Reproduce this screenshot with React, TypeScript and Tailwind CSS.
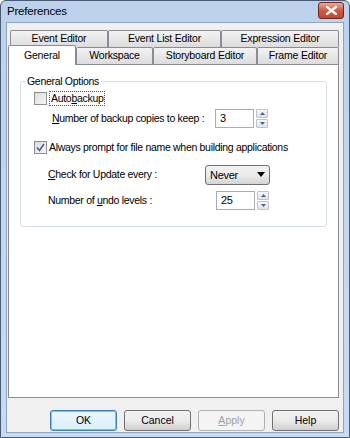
import React from 'react';

const font = { fontFamily: '"Liberation Sans", Arial, sans-serif' };

const Tab: React.FC<{ label: string; w: string; selected?: boolean }> = ({ label, w, selected }) => (
  <div
    className={`${w} flex items-center justify-center border border-[#898c95] border-b-0 rounded-t-[2px] text-[10.5px] tracking-[-0.2px] whitespace-nowrap text-black ${
      selected
        ? 'bg-white h-[20px] -mb-px relative z-10 -mt-[2px]'
        : 'h-[17px] bg-gradient-to-b from-[#f3f3f3] to-[#dcdcdc]'
    }`}
  >
    {label}
  </div>
);

const Spin: React.FC = () => (
  <div className="flex flex-col gap-px ml-[2px]">
    <div className="w-[12px] h-[9px] border border-[#bcc4cc] rounded-[1px] bg-gradient-to-b from-[#f5f7f9] to-[#dde3ea] flex items-center justify-center">
      <svg width="5" height="3" viewBox="0 0 5 3"><path d="M0 3 L2.5 0 L5 3 Z" fill="#4d6185" /></svg>
    </div>
    <div className="w-[12px] h-[9px] border border-[#bcc4cc] rounded-[1px] bg-gradient-to-b from-[#f5f7f9] to-[#dde3ea] flex items-center justify-center">
      <svg width="5" height="3" viewBox="0 0 5 3"><path d="M0 0 L2.5 3 L5 0 Z" fill="#4d6185" /></svg>
    </div>
  </div>
);

const NumInput: React.FC<{ value: string }> = ({ value }) => (
  <div className="flex items-center">
    <div className="w-[39px] h-[19px] border border-[#abadb3] border-t-[#a5acb5] bg-white flex items-center px-[4px] text-[11px] text-black">
      {value}
    </div>
    <Spin />
  </div>
);

const Btn: React.FC<{ label: React.ReactNode; focus?: boolean; disabled?: boolean }> = ({ label, focus, disabled }) => (
  <div
    className={`w-[67px] h-[21px] rounded-[3px] flex items-center justify-center text-[10.5px] ${
      disabled
        ? 'border border-[#adb2b5] bg-[#f4f4f4] text-[#a0a0a0]'
        : focus
        ? 'border border-[#3c7fb1] shadow-[inset_0_0_0_1px_#48d8fb] bg-gradient-to-b from-[#eaf6fd] to-[#d9f0fc] text-black'
        : 'border border-[#707070] bg-gradient-to-b from-[#f2f2f2] via-[#ebebeb] to-[#cfcfcf] text-black'
    }`}
  >
    {label}
  </div>
);

export default function App() {
  return (
    <div style={font} className="w-[350px] h-[438px] bg-white">
      <div className="w-[350px] h-[438px] border border-[#4a5a72] rounded-t-[6px] bg-gradient-to-b from-[#bcd2ec] to-[#c9dbf0] flex flex-col">
        {/* title bar */}
        <div className="h-[21px] flex items-center justify-between pl-[6px] pr-[5px]">
          <span className="text-[11.5px] tracking-[-0.2px] text-black">Preferences</span>
          <div className="w-[26px] h-[17px] -mt-[3px] rounded-[3px] border border-[#6b2a22] bg-gradient-to-b from-[#e9a99a] via-[#d1583f] to-[#c2472f] flex items-center justify-center">
            <svg width="11" height="9" viewBox="0 0 11 9">
              <path d="M1 1 L10 8 M10 1 L1 8" stroke="#fff" strokeWidth="2.4" strokeLinecap="square" />
            </svg>
          </div>
        </div>

        {/* client area */}
        <div className="flex-1 mx-[5px] mb-[4px] bg-[#f0f0f0] border border-[#8ea4bf] flex flex-col">
          <div className="pt-[7px] pl-[1px]">
            <div className="flex pl-[2px]">
              <Tab label="Event Editor" w="w-[98px]" />
              <Tab label="Event List Editor" w="w-[113px]" />
              <Tab label="Expression Editor" w="w-[118px]" />
            </div>
            <div className="flex items-end h-[17px]">
              <Tab label="General" w="w-[68px]" selected />
              <Tab label="Workspace" w="w-[77px]" />
              <Tab label="Storyboard Editor" w="w-[104px]" />
              <Tab label="Frame Editor" w="w-[82px]" />
            </div>
            {/* panel */}
            <div className="w-[331px] h-[334px] bg-white border border-[#898c95] pt-[16px] px-[11px]">
              <div className="relative border border-[#d5dfe5] rounded-[3px] h-[146px] pt-[9px] pl-[13px] text-[10.5px] tracking-[-0.3px] whitespace-nowrap text-black">
                <span className="absolute -top-[8px] left-[4px] bg-white px-[2px]">General Options</span>
                <div className="flex items-center gap-[2px]">
                  <div className="w-[13px] h-[13px] border border-[#8f8f8f] bg-gradient-to-br from-[#dcdcdc] to-[#f6f6f6]" />
                  <span className="border border-dotted border-[#555] px-px leading-[13px]">
                    Auto<span className="underline">b</span>ackup
                  </span>
                </div>
                <div className="flex items-center mt-[3px] pl-[18px]">
                  <span className="w-[163px]">
                    <span className="underline">N</span>umber of backup copies to keep :
                  </span>
                  <NumInput value="3" />
                </div>
                <div className="flex items-center gap-[2px] mt-[12px]">
                  <div className="w-[13px] h-[13px] border border-[#8f8f8f] bg-gradient-to-br from-[#dcdcdc] to-[#f6f6f6] flex items-center justify-center">
                    <svg width="9" height="9" viewBox="0 0 9 9">
                      <path d="M1 4.5 L3.5 7.5 L8 1" stroke="#4a5f97" strokeWidth="1.6" fill="none" />
                    </svg>
                  </div>
                  <span>Always prompt for file name when building applications</span>
                </div>
                <div className="flex items-center mt-[9px] pl-[14px]">
                  <span className="w-[157px]">
                    <span className="underline">C</span>heck for Update every :
                  </span>
                  <div className="w-[65px] h-[20px] rounded-[3px] border border-[#707070] bg-gradient-to-b from-[#f2f2f2] via-[#ebebeb] to-[#d5d5d5] flex items-center justify-between px-[4px] text-[11px]">
                    <span>Never</span>
                    <svg width="8" height="5" viewBox="0 0 8 5"><path d="M0 0 L8 0 L4 5 Z" fill="#000" /></svg>
                  </div>
                </div>
                <div className="flex items-start mt-[6px] pl-[14px]">
                  <span className="w-[168px] mt-[2px]">
                    Number of <span className="underline">u</span>ndo levels :
                  </span>
                  <NumInput value="25" />
                </div>
              </div>
            </div>
          </div>
          <div className="flex justify-end gap-[7px] pr-[4px] mt-[12px]">
            <Btn label="OK" focus />
            <Btn label="Cancel" />
            <Btn label={<><span className="underline">A</span>pply</>} disabled />
            <Btn label="Help" />
          </div>
        </div>
      </div>
    </div>
  );
}
